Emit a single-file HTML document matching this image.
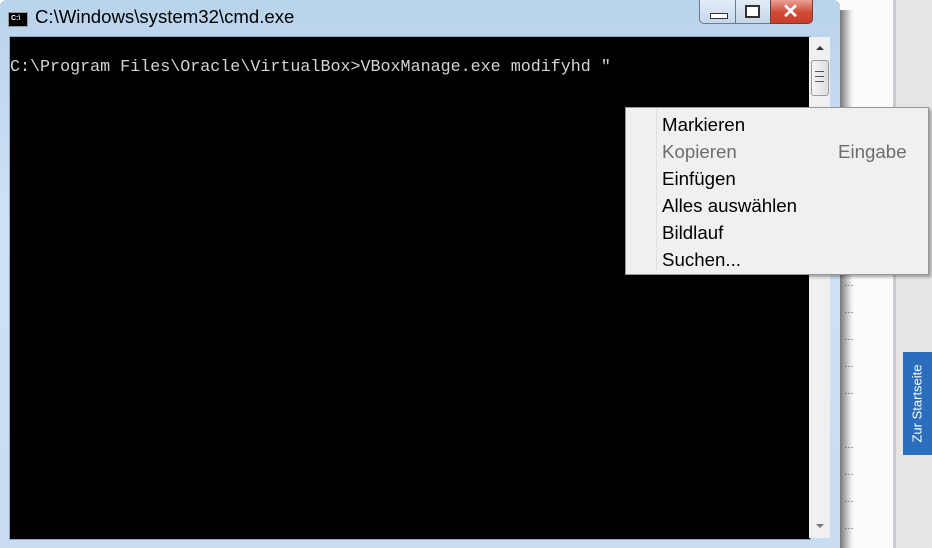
<!DOCTYPE html>
<html><head><style>
body{margin:0;width:932px;height:548px;overflow:hidden;position:relative;background:#fff;font-family:"Liberation Sans",sans-serif}
.abs{position:absolute}
</style></head><body>
<div class="abs" style="left:840px;top:0;width:58px;height:548px;background:#fcfcfc"></div>
<div class="abs" style="left:893px;top:0;width:3px;height:548px;background:#c8ccd2"></div>
<div class="abs" style="left:896px;top:0;width:36px;height:548px;background:#e6e6e6"></div>
<div class="abs" style="left:903px;top:352px;width:29px;height:103px;background:#2a6ebd"></div>
<div class="abs" style="left:903px;top:352px;width:29px;height:103px;display:flex;align-items:center;justify-content:center"><div style="transform:rotate(-90deg);color:#fff;font-size:13px;white-space:nowrap">Zur Startseite</div></div>
<div class="abs" style="left:840px;top:10px;width:14px;height:538px;background:linear-gradient(90deg,#777,#eee 80%,transparent)"></div>
<div class="abs" style="left:844px;top:270px;color:#555;font-size:10px;line-height:27px">…<br>…<br>…<br>…<br>…<br><br>…<br>…<br>…<br>…</div>
<div class="abs" style="left:0;top:0;width:840px;height:548px;background:linear-gradient(180deg,#b9d3ec,#cfe2f5 40%,#c8ddf2);border-radius:6px 6px 0 0"></div>
<div class="abs" style="left:8px;top:12px;width:18px;height:13px;background:#000;border:1px solid #999"><span style="color:#fff;font-size:7px;font-weight:bold;position:absolute;left:2px;top:2px">C:\</span></div>
<div class="abs" style="left:35px;top:6px;font-size:18.6px;color:#000">C:\Windows\system32\cmd.exe</div>
<div class="abs" style="left:699px;top:0;width:46px;height:23px;border:1px solid #6b7b90;border-top:none;border-radius:0 0 0 5px;background:linear-gradient(#e3ecf7,#c6d6ea)"></div>
<div class="abs" style="left:710px;top:13px;width:16px;height:4px;border:1px solid #333;background:#fff"></div>
<div class="abs" style="left:735px;top:0;width:34px;height:23px;border:1px solid #6b7b90;border-top:none;background:linear-gradient(#e3ecf7,#c6d6ea)"></div>
<div class="abs" style="left:745px;top:5px;width:11px;height:9px;border:2px solid #333;background:#fff"></div>
<div class="abs" style="left:770px;top:0;width:41px;height:23px;border:1px solid #7a3a30;border-top:none;border-radius:0 0 5px 0;background:linear-gradient(#e9a093,#cf4a35 55%,#c8402c)"></div>
<div class="abs" style="left:770px;top:-1px;width:41px;text-align:center;color:#fff;font-size:20px;font-weight:bold">✕</div>
<div class="abs" style="left:9px;top:36px;width:800px;height:502px;background:#000;border:1px solid #8fa6c0"></div>
<div class="abs" style="left:10px;top:58px;color:#d4d4d4;font-family:'Liberation Mono',monospace;font-size:16.7px;white-space:pre">C:\Program Files\Oracle\VirtualBox&gt;VBoxManage.exe modifyhd "</div>
<div class="abs" style="left:809px;top:37px;width:21px;height:501px;background:#f0f0f0"></div>
<div class="abs" style="left:816px;top:46px;width:0;height:0;border-left:4px solid transparent;border-right:4px solid transparent;border-bottom:4px solid #333"></div>
<div class="abs" style="left:816px;top:524px;width:0;height:0;border-left:4px solid transparent;border-right:4px solid transparent;border-top:4px solid #777"></div>
<div class="abs" style="left:811px;top:60px;width:16px;height:34px;border:1px solid #999;border-radius:3px;background:linear-gradient(90deg,#f4f4f4,#ddd)"></div>
<div class="abs" style="left:815px;top:71px;width:9px;height:9px;border-top:1px solid #555;border-bottom:1px solid #555"><div style="margin-top:4px;border-top:1px solid #555"></div></div>
<svg class="abs" style="left:625px;top:105px" width="14" height="22"><path d="M1 1 L1 17 L5 13 L8 20 L10 19 L7 12 L12 12 Z" fill="#fff" stroke="#000"/></svg>
<div class="abs" style="left:625px;top:107px;width:302px;height:166px;background:#f0f0f0;border:1px solid #979797;box-shadow:2px 2px 3px rgba(0,0,0,.35)"></div>
<div class="abs" style="left:656px;top:109px;width:1px;height:162px;background:#e0e0e0"></div>
<div class="abs" style="left:662px;top:111px;font-size:18.7px;line-height:27px;color:#000">Markieren<br><span style="color:#6d6d6d">Kopieren</span><br>Einfügen<br>Alles auswählen<br>Bildlauf<br>Suchen...</div>
<div class="abs" style="left:838px;top:138px;font-size:18.7px;line-height:27px;color:#6d6d6d">Eingabe</div>
</body></html>
